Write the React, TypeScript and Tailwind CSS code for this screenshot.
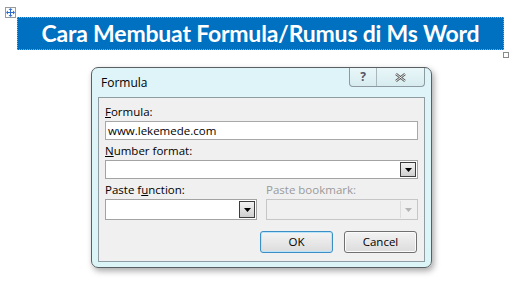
import React from "react";

const Arrow = ({ disabled }: { disabled?: boolean }) => (
  <svg width="7" height="4" viewBox="0 0 7 4">
    <path d="M0 0H7L3.5 4Z" fill={disabled ? "#b4b4b4" : "#000"} />
  </svg>
);

const MoveIcon = () => (
  <svg width="9" height="9" viewBox="0 0 9 9">
    <path
      d="M4.5 0L6.5 2H5V4H7V2.5L9 4.5L7 6.5V5H5V7H6.5L4.5 9L2.5 7H4V5H2V6.5L0 4.5L2 2.5V4H4V2H2.5Z"
      fill="#2f6cd0"
    />
  </svg>
);

function Combo({ w, h, disabled }: { w: string; h: string; disabled?: boolean }) {
  return (
    <div className={`flex ${w} ${h} border ${disabled ? "border-[#c6c6c6] bg-[#f0f0f0]" : "border-[#a3a3a3] bg-white"} p-px justify-end`}>
      {disabled ? (
        <div className="w-[16px] flex items-center justify-center border-l border-[#dcdcdc]">
          <Arrow disabled />
        </div>
      ) : (
        <div className="w-[16px] flex items-center justify-center border border-[#3d3d3d] bg-gradient-to-b from-[#f3f3f3] to-[#cfcfcf]">
          <Arrow />
        </div>
      )}
    </div>
  );
}

export default function App() {
  const ui = { fontFamily: '"Segoe UI", "Open Sans", "Noto Sans", sans-serif' };
  return (
    <div className="relative w-[525px] h-[306px] bg-white overflow-hidden">
      <div className="absolute left-[5px] top-[7px] w-[11px] h-[11px] border border-[#9a9a9a] bg-white flex items-center justify-center">
        <MoveIcon />
      </div>
      <div className="absolute left-[503px] top-[52px] w-[6px] h-[6px] border border-[#8a8a8a] bg-white" />

      <div className="flex flex-col pt-[17px]">
        <div className="ml-[17px] w-[487px] h-[33px] bg-[#0070c0] outline outline-1 outline-dotted outline-[#7fa9d6] -outline-offset-1 flex items-center justify-center">
          <span
            className="text-white font-bold text-[23px] leading-none tracking-[-0.2px]"
            style={{ fontFamily: '"Lato", "Open Sans", sans-serif' }}
          >
            Cara Membuat Formula/Rumus di Ms Word
          </span>
        </div>

        <div
          className="ml-[91px] mt-[17px] w-[341px] h-[201px] rounded-[7px] border border-[#5a5f63] bg-gradient-to-b from-[#dff4f8] to-[#dbf5f7] shadow-[2px_3px_6px_rgba(0,0,0,0.35)] flex flex-col px-[6px] pb-[5px] text-[11.5px] text-black"
          style={ui}
        >
          <div className="h-[29px] flex items-start justify-between">
            <span className="ml-[3px] mt-[7px] leading-[16px] text-[12px]">Formula</span>
            <div className="flex h-[19px] border border-t-0 border-[#8d9aa1] rounded-b-[4px] bg-gradient-to-b from-[#e9f7f9] to-[#d7ecef]">
              <div className="w-[27px] flex items-center justify-center border-r border-[#a9b6bc] text-[12px] font-bold text-[#556] leading-none">
                ?
              </div>
              <div className="w-[47px] flex items-center justify-center">
                <svg width="11" height="9" viewBox="0 0 11 9">
                  <path d="M1 1L10 8M10 1L1 8" stroke="#555" strokeWidth="2.4" />
                  <path d="M1 1L10 8M10 1L1 8" stroke="#fff" strokeWidth="0.9" />
                </svg>
              </div>
            </div>
          </div>

          <div className="flex-1 border border-[#8f9ca3] bg-[#f0f0f0] flex flex-col px-[6px]">
            <span className="mt-[6px] leading-[16px]">
              <u>F</u>ormula:
            </span>
            <div className="mt-[1px] w-[313px] h-[19px] border border-[#a8a8a8] bg-white flex items-center pl-[2px] leading-none">
              www.lekemede.com
            </div>
            <span className="mt-[3px] leading-[16px]">
              <u>N</u>umber format:
            </span>
            <div className="mt-[1px]">
              <Combo w="w-[313px]" h="h-[19px]" />
            </div>
            <div className="flex gap-[9px] mt-[3px]">
              <div className="flex flex-col">
                <span className="leading-[16px]">
                  Paste f<u>u</u>nction:
                </span>
                <div className="mt-[1px]">
                  <Combo w="w-[152px]" h="h-[21px]" />
                </div>
              </div>
              <div className="flex flex-col">
                <span className="leading-[16px] text-[#9a9a9a]">Paste bookmark:</span>
                <div className="mt-[1px]">
                  <Combo w="w-[152px]" h="h-[21px]" disabled />
                </div>
              </div>
            </div>
            <div className="flex justify-end gap-[11px] mt-[11px] pr-[1px]">
              <div className="w-[73px] h-[22px] rounded-[3px] border border-[#3c8fc5] shadow-[inset_0_0_0_1px_#b9e4f9] bg-gradient-to-b from-[#f4f4f4] to-[#dcdcdc] flex items-center justify-center">
                OK
              </div>
              <div className="w-[73px] h-[22px] rounded-[3px] border border-[#707070] shadow-[inset_0_0_0_1px_#fbfbfb] bg-gradient-to-b from-[#f3f3f3] to-[#dcdcdc] flex items-center justify-center">
                Cancel
              </div>
            </div>
          </div>
        </div>
      </div>
    </div>
  );
}
